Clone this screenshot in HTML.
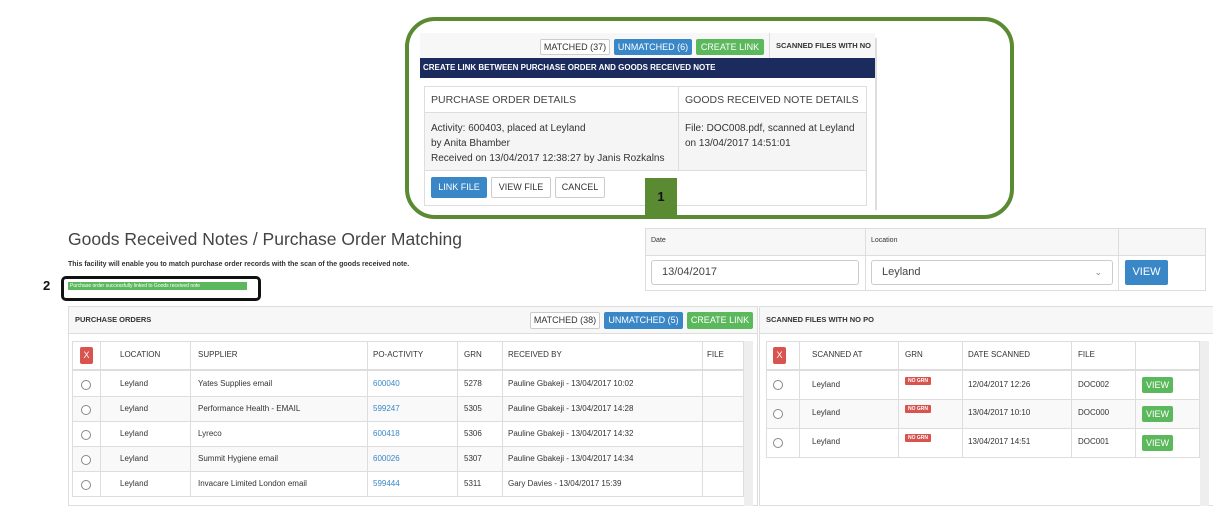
<!DOCTYPE html>
<html><head><meta charset="utf-8"><style>
*{box-sizing:border-box;margin:0;padding:0}
body{width:1213px;height:514px;background:#fff;position:relative;overflow:hidden;font-family:"Liberation Sans",Arial,sans-serif;color:#333}
.a{position:absolute}
.btn{position:absolute;font-size:9px;text-align:center;border-radius:2px;border:1px solid #ccc;background:#fff;color:#333}
.bb{background:#3a87c8;border-color:#3a87c8;color:#fff}
.bg{background:#5cb85c;border-color:#5cb85c;color:#fff}
.t{position:absolute;font-size:8px;color:#333}
.ln{position:absolute;background:#ddd}
.rad{position:absolute;width:10px;height:10px;border:1px solid #888;border-radius:50%;background:#fff}
.xb{position:absolute;width:13px;height:17px;background:#d9534f;color:#fff;font-size:9px;text-align:center;line-height:17px;border-radius:2px}
.ng{position:absolute;background:#d9534f;color:#fff;font-size:5px;font-weight:bold;padding:1px 3px;border-radius:1px}
.vw{position:absolute;width:31px;height:16px;background:#5cb85c;color:#fff;font-size:9px;text-align:center;line-height:16px;border-radius:2px}
</style></head><body>

<div class="a" style="left:405px;top:17px;width:609px;height:202px;border:4px solid #5a8a32;border-radius:30px"></div>
<div class="a" style="left:420px;top:33px;width:455px;height:26px;background:#f7f7f7"></div>
<div class="btn" style="left:540px;top:39px;width:70px;height:16px;line-height:14px">MATCHED (37)</div>
<div class="btn bb" style="left:614px;top:39px;width:78px;height:16px;line-height:14px">UNMATCHED (6)</div>
<div class="btn bg" style="left:696px;top:39px;width:68px;height:16px;line-height:14px">CREATE LINK</div>
<div class="a" style="left:769px;top:33px;width:1px;height:26px;background:#ddd"></div>
<div class="t" style="left:776px;top:41px;font-size:7.5px;font-weight:bold">SCANNED FILES WITH NO</div>
<div class="a" style="left:420px;top:58px;width:455px;height:20px;background:#1b2b5e;color:#fff;font-size:8px;font-weight:bold;line-height:20px;padding-left:3px">CREATE LINK BETWEEN PURCHASE ORDER AND GOODS RECEIVED NOTE</div>
<div class="a" style="left:875px;top:38px;width:2px;height:172px;background:#ddd"></div>
<div class="a" style="left:424px;top:86px;width:443px;height:120px;border:1px solid #ddd;background:#fff"></div>
<div class="a" style="left:425px;top:112px;width:441px;height:58px;background:#f5f5f5"></div>
<div class="ln" style="left:424px;top:112px;width:443px;height:1px"></div>
<div class="ln" style="left:424px;top:170px;width:443px;height:1px"></div>
<div class="ln" style="left:678px;top:86px;width:1px;height:84px"></div>
<div class="t" style="left:431px;top:94px;font-size:10.5px;color:#444">PURCHASE ORDER DETAILS</div>
<div class="t" style="left:685px;top:94px;font-size:10.5px;color:#444">GOODS RECEIVED NOTE DETAILS</div>
<div class="t" style="left:431px;top:121px;font-size:10px;line-height:15px">Activity: 600403, placed at Leyland<br>by Anita Bhamber<br>Received on 13/04/2017 12:38:27 by Janis Rozkalns</div>
<div class="t" style="left:685px;top:121px;font-size:10px;line-height:15px">File: DOC008.pdf, scanned at Leyland<br>on 13/04/2017 14:51:01</div>
<div class="btn bb" style="left:431px;top:177px;width:56px;height:21px;line-height:19px">LINK FILE</div>
<div class="btn" style="left:491px;top:177px;width:60px;height:21px;line-height:19px">VIEW FILE</div>
<div class="btn" style="left:555px;top:177px;width:50px;height:21px;line-height:19px">CANCEL</div>
<div class="a" style="left:645px;top:178px;width:32px;height:41px;background:#5a8a32;color:#111;font-weight:bold;font-size:13px;text-align:center;line-height:38px">1</div>

<div class="t" style="left:68px;top:229px;font-size:17.5px;color:#444">Goods Received Notes / Purchase Order Matching</div>
<div class="t" style="left:68px;top:261px;font-size:7px;font-weight:bold;color:#333">This facility will enable you to match purchase order records with the scan of the goods received note.</div>
<div class="a" style="left:61px;top:276px;width:200px;height:25px;border:3px solid #111;border-radius:5px"></div>
<div class="a" style="left:68px;top:282px;width:179px;height:8px;background:#5cb85c;color:#fff;font-size:5px;line-height:8px;padding-left:2px;white-space:nowrap;overflow:hidden">Purchase order successfully linked to Goods received note</div>
<div class="t" style="left:43px;top:278px;font-size:13px;font-weight:bold;color:#111">2</div>

<div class="a" style="left:645px;top:228px;width:561px;height:63px;border:1px solid #ddd"></div>
<div class="a" style="left:646px;top:229px;width:559px;height:26px;background:#f7f7f7"></div>
<div class="ln" style="left:645px;top:255px;width:561px;height:1px"></div>
<div class="ln" style="left:865px;top:228px;width:1px;height:63px"></div>
<div class="ln" style="left:1118px;top:228px;width:1px;height:63px"></div>
<div class="t" style="left:651px;top:237px;font-size:7px">Date</div>
<div class="t" style="left:871px;top:237px;font-size:7px">Location</div>
<div class="a" style="left:651px;top:260px;width:208px;height:25px;border:1px solid #ccc;border-radius:3px;font-size:11px;line-height:23px;padding-left:10px;color:#444">13/04/2017</div>
<div class="a" style="left:871px;top:260px;width:242px;height:25px;border:1px solid #ccc;border-radius:3px;font-size:11px;line-height:23px;padding-left:10px;color:#444">Leyland<span style="position:absolute;right:10px;font-size:9px;color:#888">&#8964;</span></div>
<div class="btn bb" style="left:1125px;top:260px;width:43px;height:25px;line-height:23px;font-size:11px">VIEW</div>

<div class="a" style="left:68px;top:306px;width:690px;height:200px;border:1px solid #ddd"></div>
<div class="a" style="left:69px;top:307px;width:688px;height:26px;background:#f7f7f7"></div>
<div class="ln" style="left:68px;top:333px;width:690px;height:1px"></div>
<div class="t" style="left:75px;top:315px;font-size:7.5px;font-weight:bold">PURCHASE ORDERS</div>
<div class="btn" style="left:530px;top:312px;width:70px;height:17px;line-height:15px">MATCHED (38)</div>
<div class="btn bb" style="left:604px;top:312px;width:79px;height:17px;line-height:15px">UNMATCHED (5)</div>
<div class="btn bg" style="left:687px;top:312px;width:66px;height:17px;line-height:15px">CREATE LINK</div>
<div class="a" style="left:72px;top:341px;width:672px;height:156px;border:1px solid #ddd"></div>
<div class="a" style="left:744px;top:341px;width:9px;height:165px;background:#eee"></div>
<div class="a" style="left:73px;top:396px;width:670px;height:25px;background:#f9f9f9"></div>
<div class="a" style="left:73px;top:446px;width:670px;height:25px;background:#f9f9f9"></div>
<div class="ln" style="left:72px;top:369px;width:672px;height:2px"></div>
<div class="ln" style="left:72px;top:396px;width:672px;height:1px"></div>
<div class="ln" style="left:72px;top:421px;width:672px;height:1px"></div>
<div class="ln" style="left:72px;top:446px;width:672px;height:1px"></div>
<div class="ln" style="left:72px;top:471px;width:672px;height:1px"></div>
<div class="ln" style="left:100px;top:341px;width:1px;height:156px"></div>
<div class="ln" style="left:190px;top:341px;width:1px;height:156px"></div>
<div class="ln" style="left:367px;top:341px;width:1px;height:156px"></div>
<div class="ln" style="left:457px;top:341px;width:1px;height:156px"></div>
<div class="ln" style="left:502px;top:341px;width:1px;height:156px"></div>
<div class="ln" style="left:702px;top:341px;width:1px;height:156px"></div>
<div class="xb" style="left:80px;top:347px">X</div>
<div class="t" style="left:120px;top:350px">LOCATION</div>
<div class="t" style="left:198px;top:350px">SUPPLIER</div>
<div class="t" style="left:373px;top:350px">PO-ACTIVITY</div>
<div class="t" style="left:464px;top:350px">GRN</div>
<div class="t" style="left:508px;top:350px">RECEIVED BY</div>
<div class="t" style="left:707px;top:350px">FILE</div>

<div class="rad" style="left:81px;top:380px"></div><div class="t" style="left:120px;top:379px">Leyland</div><div class="t" style="left:198px;top:379px">Yates Supplies email</div><div class="t" style="left:373px;top:379px;color:#3a87c8">600040</div><div class="t" style="left:464px;top:379px">5278</div><div class="t" style="left:508px;top:379px">Pauline Gbakeji - 13/04/2017 10:02</div>
<div class="rad" style="left:81px;top:405px"></div><div class="t" style="left:120px;top:404px">Leyland</div><div class="t" style="left:198px;top:404px">Performance Health - EMAIL</div><div class="t" style="left:373px;top:404px;color:#3a87c8">599247</div><div class="t" style="left:464px;top:404px">5305</div><div class="t" style="left:508px;top:404px">Pauline Gbakeji - 13/04/2017 14:28</div>
<div class="rad" style="left:81px;top:430px"></div><div class="t" style="left:120px;top:429px">Leyland</div><div class="t" style="left:198px;top:429px">Lyreco</div><div class="t" style="left:373px;top:429px;color:#3a87c8">600418</div><div class="t" style="left:464px;top:429px">5306</div><div class="t" style="left:508px;top:429px">Pauline Gbakeji - 13/04/2017 14:32</div>
<div class="rad" style="left:81px;top:455px"></div><div class="t" style="left:120px;top:454px">Leyland</div><div class="t" style="left:198px;top:454px">Summit Hygiene email</div><div class="t" style="left:373px;top:454px;color:#3a87c8">600026</div><div class="t" style="left:464px;top:454px">5307</div><div class="t" style="left:508px;top:454px">Pauline Gbakeji - 13/04/2017 14:34</div>
<div class="rad" style="left:81px;top:480px"></div><div class="t" style="left:120px;top:479px">Leyland</div><div class="t" style="left:198px;top:479px">Invacare Limited London email</div><div class="t" style="left:373px;top:479px;color:#3a87c8">599444</div><div class="t" style="left:464px;top:479px">5311</div><div class="t" style="left:508px;top:479px">Gary Davies - 13/04/2017 15:39</div>

<div class="a" style="left:759px;top:306px;width:460px;height:200px;border:1px solid #ddd"></div>
<div class="a" style="left:760px;top:307px;width:453px;height:26px;background:#f7f7f7"></div>
<div class="ln" style="left:759px;top:333px;width:454px;height:1px"></div>
<div class="t" style="left:766px;top:315px;font-size:7.5px;font-weight:bold">SCANNED FILES WITH NO PO</div>
<div class="a" style="left:766px;top:341px;width:434px;height:117px;border:1px solid #ddd"></div>
<div class="a" style="left:1200px;top:341px;width:9px;height:165px;background:#eee"></div>
<div class="a" style="left:767px;top:399px;width:432px;height:29px;background:#f9f9f9"></div>
<div class="ln" style="left:766px;top:369px;width:434px;height:2px"></div>
<div class="ln" style="left:766px;top:399px;width:434px;height:1px"></div>
<div class="ln" style="left:766px;top:428px;width:434px;height:1px"></div>
<div class="ln" style="left:799px;top:341px;width:1px;height:117px"></div>
<div class="ln" style="left:898px;top:341px;width:1px;height:117px"></div>
<div class="ln" style="left:962px;top:341px;width:1px;height:117px"></div>
<div class="ln" style="left:1071px;top:341px;width:1px;height:117px"></div>
<div class="ln" style="left:1135px;top:341px;width:1px;height:117px"></div>
<div class="xb" style="left:773px;top:347px">X</div>
<div class="t" style="left:812px;top:350px">SCANNED AT</div>
<div class="t" style="left:905px;top:350px">GRN</div>
<div class="t" style="left:968px;top:350px">DATE SCANNED</div>
<div class="t" style="left:1078px;top:350px">FILE</div>

<div class="rad" style="left:773px;top:380px"></div><div class="t" style="left:812px;top:380px">Leyland</div><div class="ng" style="left:905px;top:377px">NO GRN</div><div class="t" style="left:968px;top:380px">12/04/2017 12:26</div><div class="t" style="left:1078px;top:380px">DOC002</div><div class="vw" style="left:1142px;top:377px">VIEW</div>
<div class="rad" style="left:773px;top:409px"></div><div class="t" style="left:812px;top:408px">Leyland</div><div class="ng" style="left:905px;top:405px">NO GRN</div><div class="t" style="left:968px;top:408px">13/04/2017 10:10</div><div class="t" style="left:1078px;top:408px">DOC000</div><div class="vw" style="left:1142px;top:406px">VIEW</div>
<div class="rad" style="left:773px;top:438px"></div><div class="t" style="left:812px;top:437px">Leyland</div><div class="ng" style="left:905px;top:434px">NO GRN</div><div class="t" style="left:968px;top:437px">13/04/2017 14:51</div><div class="t" style="left:1078px;top:437px">DOC001</div><div class="vw" style="left:1142px;top:435px">VIEW</div>

</body></html>
